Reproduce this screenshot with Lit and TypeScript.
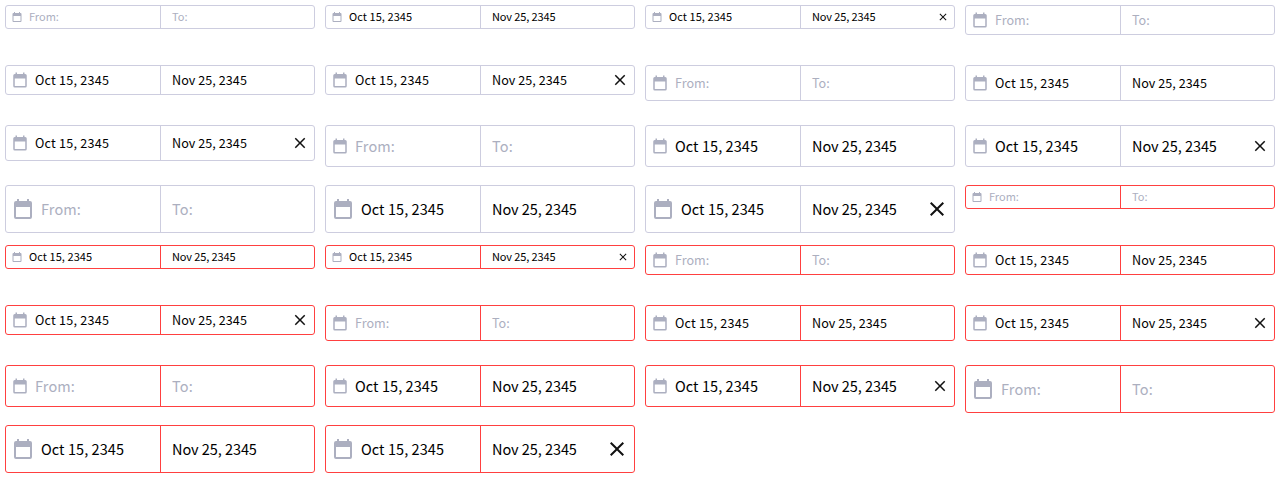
import { LitElement, html, css } from "lit";
import { customElement, property } from "lit/decorators.js";
import { classMap } from "lit/directives/class-map.js";

@customElement("date-range-input")
class DateRangeInput extends LitElement {
  @property() size = "m";
  @property() from = "";
  @property() to = "";
  @property({ type: Boolean }) clearable = false;
  @property({ type: Boolean }) invalid = false;

  static styles = css`
    :host { display: block; }
    .box {
      --line: #cdcddf;
      --start-spacing: 0.23px;
      --end-spacing: 0.05px;
      display: flex;
      box-sizing: border-box;
      width: 310px;
      height: 30px;
      border: 1px solid var(--line);
      border-radius: 3px;
      background: #fff;
      color: #000;
      font-family: "Noto Sans CJK SC", sans-serif;
      font-size: 12.6px;
      line-height: 20px;
    }
    .invalid { --line: #ff4040; }
    .half { display: flex; align-items: center; box-sizing: border-box; white-space: pre; }
    .start { width: 155px; padding-left: 5px; border-right: 1px solid var(--line); }
    .end { flex: 1; padding: 0 5px 0 11px; }
    .value { flex: 1; }
    .start .value { letter-spacing: var(--start-spacing); }
    .end .value { letter-spacing: var(--end-spacing); }
    .half .empty { color: #acafbf; letter-spacing: 0; }
    svg { display: block; flex: none; width: 18px; height: 18px; }
    .calendar { fill: #acafc0; margin-right: 6px; }
    .cross { fill: #111; }
    .xs { --start-spacing: 0.06px; --end-spacing: -0.12px; height: 24px; font-size: 11px; }
    .xs svg { width: 12px; height: 12px; }
    .xs .value { line-height: 18px; padding-bottom: 2px; }
    .m { height: 36px; }
    .l { height: 42px; }
    .xl { height: 48px; }
    .l, .xl { --start-spacing: 0.06px; --end-spacing: -0.06px; font-size: 14.5px; }
    .l .empty, .xl .empty { letter-spacing: 0.12px; }
    .xl svg { width: 24px; height: 24px; }
  `;

  render() {
    const part = (value: string, hint: string) =>
      html`<span class=${classMap({ value: true, empty: !value })}>${value || hint}</span>`;
    return html`<div class=${classMap({ box: true, [this.size]: true, invalid: this.invalid })}>
      <div class="half start">
        <svg class="calendar" viewBox="0 0 24 24"><path d="M19 4h-1V2h-2v2H8V2H6v2H5a2 2 0 0 0-2 2v14a2 2 0 0 0 2 2h14a2 2 0 0 0 2-2V6a2 2 0 0 0-2-2zm0 16H5V10h14z"/></svg>
        ${part(this.from, "From:")}
      </div>
      <div class="half end">
        ${part(this.to, "To:")}
        ${this.clearable
          ? html`<svg class="cross" viewBox="0 0 24 24"><path d="M19 6.41L17.59 5 12 10.59 6.41 5 5 6.41 10.59 12 5 17.59 6.41 19 12 13.41 17.59 19 19 17.59 13.41 12z"/></svg>`
          : ""}
      </div>
    </div>`;
  }
}

@customElement("app-root")
class AppRoot extends LitElement {
  static styles = css`
    :host { display: block; background: #fff; }
    .grid { display: grid; grid-template-columns: repeat(4, 320px); grid-auto-rows: 60px; }
    .cell { padding: 5px; }
  `;

  render() {
    const cells = [false, true].flatMap((invalid) =>
      ["xs", "s", "m", "l", "xl"].flatMap((size) =>
        [0, 1, 2].map((kind) => ({ invalid, size, filled: kind > 0, clearable: kind === 2 }))
      )
    );
    return html`<div class="grid">
      ${cells.map((c) => html`<div class="cell">
        <date-range-input
          .size=${c.size}
          .invalid=${c.invalid}
          .clearable=${c.clearable}
          .from=${c.filled ? "Oct 15, 2345" : ""}
          .to=${c.filled ? "Nov 25, 2345" : ""}
        ></date-range-input>
      </div>`)}
    </div>`;
  }
}
